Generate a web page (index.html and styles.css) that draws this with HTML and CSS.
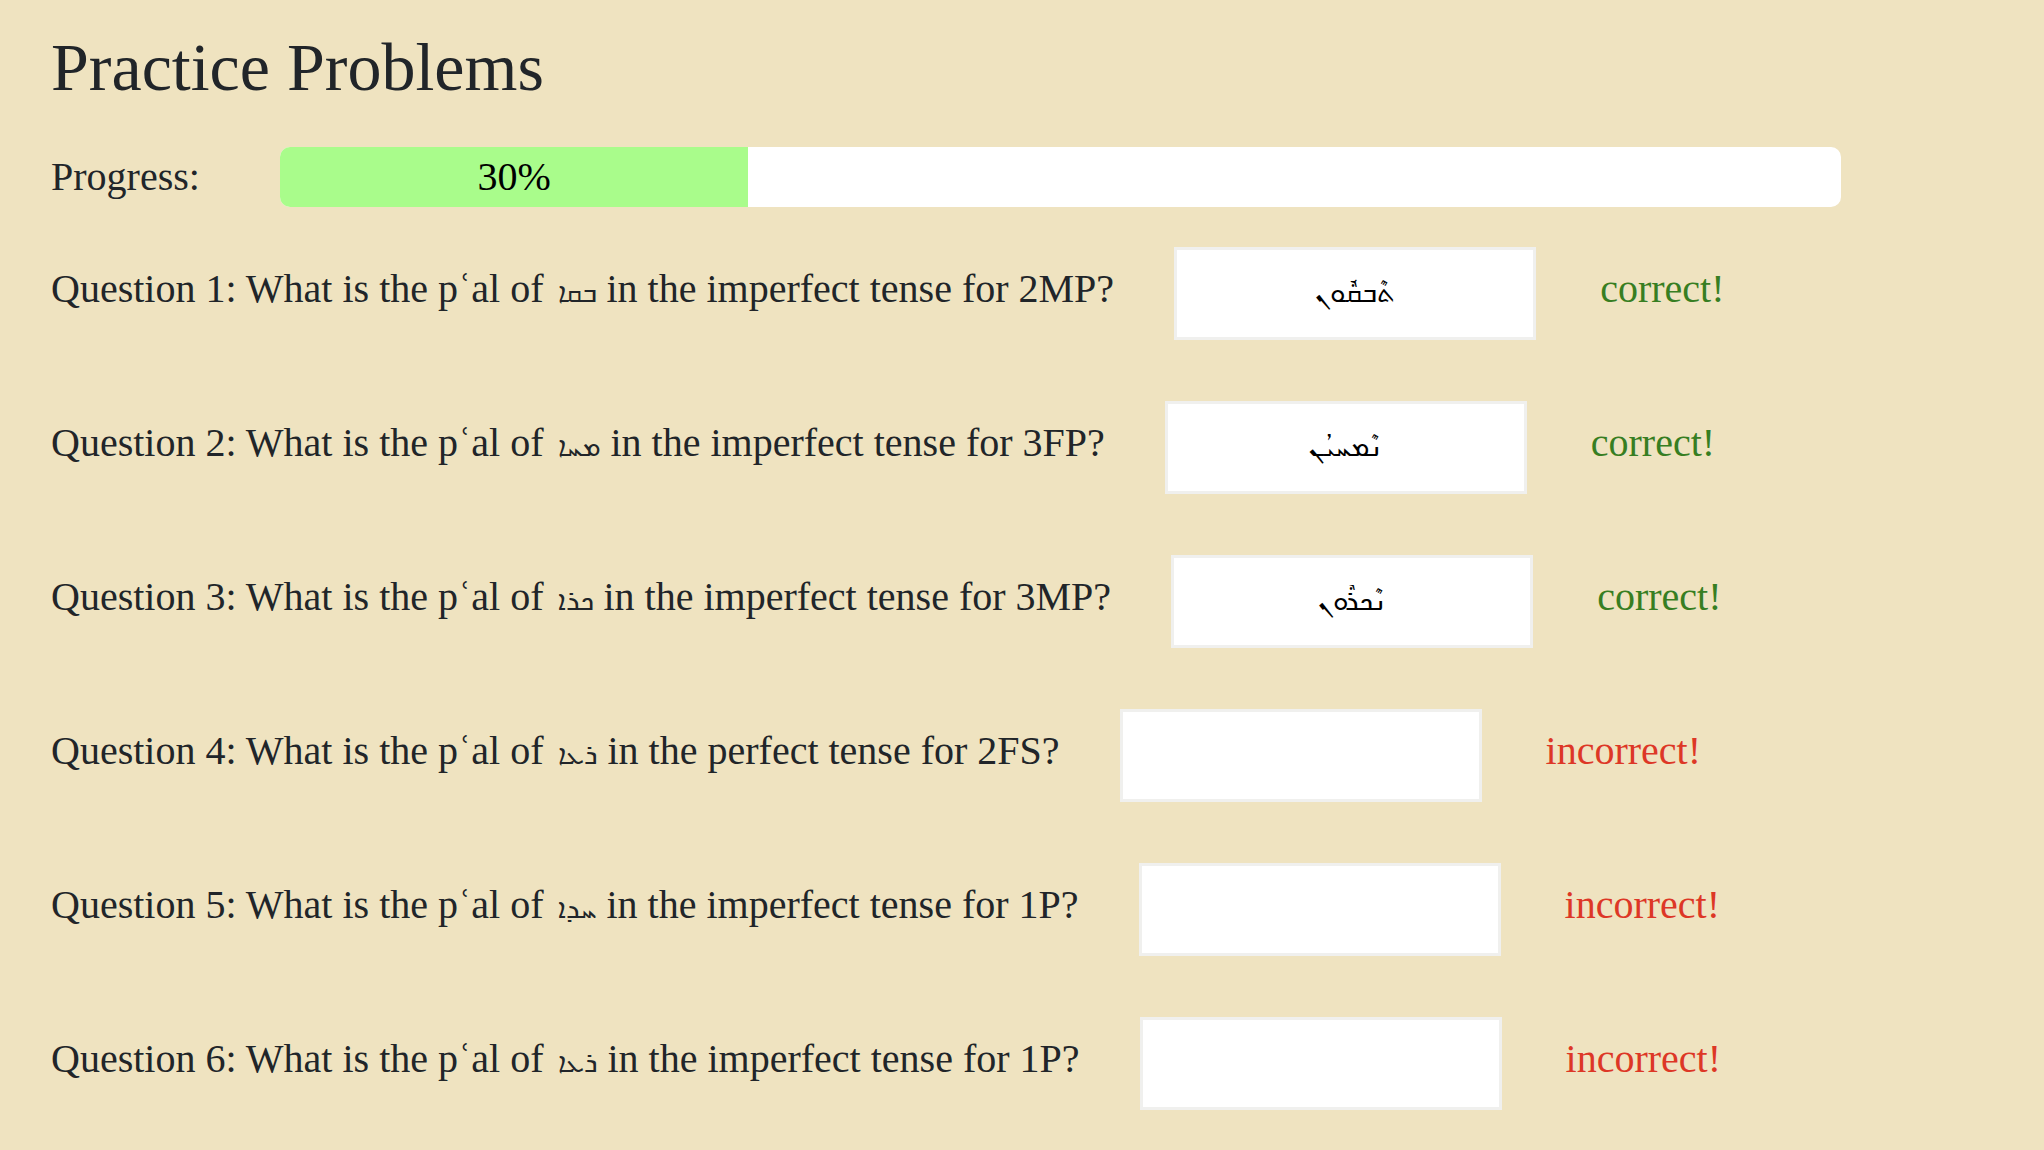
FILE: index.html
```html
<!DOCTYPE html>
<html lang="en">
<head>
    <meta charset="UTF-8">
    <meta name="viewport" content="width=device-width, initial-scale=1.0">
    <title>Practice Problems</title>
    <link rel="stylesheet" href="styles.css">
</head>
<body>

<h1>Practice Problems</h1>

<div class="progress-row">
    <span class="progress-label" id="progressLabel">Progress:</span>
    <div class="progress" role="progressbar" aria-labelledby="progressLabel" aria-valuenow="30" aria-valuemin="0" aria-valuemax="100">
        <div class="progress-bar" style="width: 30%">30%</div>
    </div>
</div>

<form class="questions">
    <div class="question">
        <label for="answer1">Question 1: What is the pʿal of <bdi class="syriac" lang="syr">ܒܩܐ</bdi> in the imperfect tense for 2MP?</label>
        <input type="text" class="answer" id="answer1" lang="syr" dir="rtl" value="ܬܶܒܩܽܘܢ">
        <span class="result correct">correct!</span>
    </div>
    <div class="question">
        <label for="answer2">Question 2: What is the pʿal of <bdi class="syriac" lang="syr">ܡܚܐ</bdi> in the imperfect tense for 3FP?</label>
        <input type="text" class="answer" id="answer2" lang="syr" dir="rtl" value="ܢܶܡܚܝܳܢ">
        <span class="result correct">correct!</span>
    </div>
    <div class="question">
        <label for="answer3">Question 3: What is the pʿal of <bdi class="syriac" lang="syr">ܟܪܐ</bdi> in the imperfect tense for 3MP?</label>
        <input type="text" class="answer" id="answer3" lang="syr" dir="rtl" value="ܢܶܟܪܽܘܢ">
        <span class="result correct">correct!</span>
    </div>
    <div class="question">
        <label for="answer4">Question 4: What is the pʿal of <bdi class="syriac" lang="syr">ܪܥܐ</bdi> in the perfect tense for 2FS?</label>
        <input type="text" class="answer" id="answer4" lang="syr" dir="rtl">
        <span class="result incorrect">incorrect!</span>
    </div>
    <div class="question">
        <label for="answer5">Question 5: What is the pʿal of <bdi class="syriac" lang="syr">ܚܕܐ</bdi> in the imperfect tense for 1P?</label>
        <input type="text" class="answer" id="answer5" lang="syr" dir="rtl">
        <span class="result incorrect">incorrect!</span>
    </div>
    <div class="question">
        <label for="answer6">Question 6: What is the pʿal of <bdi class="syriac" lang="syr">ܪܥܐ</bdi> in the imperfect tense for 1P?</label>
        <input type="text" class="answer" id="answer6" lang="syr" dir="rtl">
        <span class="result incorrect">incorrect!</span>
    </div>
</form>

</body>
</html>
```

FILE: styles.css
```css
* {
    box-sizing: border-box;
}
body {
    margin: 0;
    padding: 27px 51px 0;
    background-color: #efe3c0;
    color: #212529;
    font-family: Baskerville, "Liberation Serif", serif;
    font-size: 40px;
    line-height: 60px;
}
h1 {
    margin: 0 0 40px;
    font-size: 68px;
    font-weight: normal;
    line-height: 80px;
}
.progress-row {
    display: flex;
    margin-bottom: 40px;
    padding-right: 152px;
}
.progress-label {
    width: 229px;
    flex-shrink: 0;
}
.progress {
    flex: 1;
    overflow: hidden;
    background-color: white;
    border-radius: 10px;
}
.progress-bar {
    background-color: #a9fc8b;
    color: black;
    text-align: center;
}
.question {
    display: flex;
    align-items: flex-start;
    margin-bottom: 61px;
    white-space: nowrap;
}
.question label,
.result {
    padding-top: 12px;
}
.syriac {
    margin-left: 4px;
    font-size: 28px;
    line-height: 1;
}
.answer {
    width: 362px;
    height: 93px;
    margin: 0 64px 0 60px;
    border: 3px solid #f0f0ee;
    background-color: white;
    color: black;
    font-family: inherit;
    font-size: 28px;
    text-align: center;
}
.correct {
    color: #377e22;
}
.incorrect {
    color: #dd3726;
}
```
